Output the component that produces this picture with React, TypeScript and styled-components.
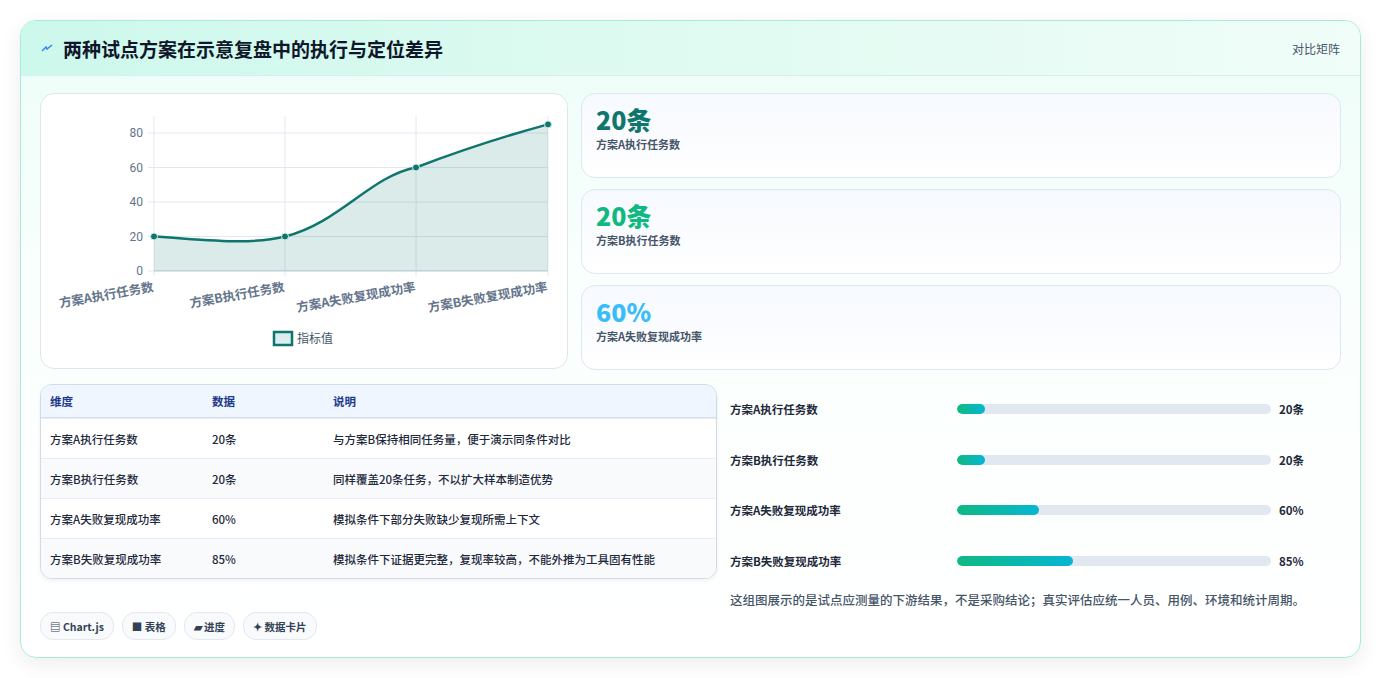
import styled, { createGlobalStyle } from 'styled-components';

const Global = createGlobalStyle`
    html, body { margin: 0; background: #ffffff; }
    body { font-family: 'Noto Sans CJK SC', 'Noto Sans', sans-serif; color: #1e293b; }
`;

const Page = styled.div`
    padding: 20px;
`;

const Card = styled.div`
    border: 1px solid #a7ecd9;
    border-radius: 16px;
    background: linear-gradient(180deg, #ecfdf7 0%, #f9fffd 40%, #ffffff 100%);
    box-shadow: 0 6px 20px rgba(15, 23, 42, 0.08);
    overflow: hidden;
    height: 638px;
    box-sizing: border-box;
`;

const Header = styled.div`
    height: 54px;
    display: flex;
    align-items: center;
    justify-content: space-between;
    padding: 0 20px;
    background: linear-gradient(90deg, #cdf8ec 0%, #e3fbf2 60%, #f0fdf8 100%);
    border-bottom: 1px solid #d7eef0;
`;

const Title = styled.h1`
    margin: 0;
    font-size: 19px;
    font-weight: 700;
    color: #0f172a;
    display: flex;
    align-items: center;
    gap: 10px;
`;

const HeaderTag = styled.span`
    font-size: 12px;
    color: #475569;
`;

const Body = styled.div`
    padding: 17px 19px 0 19px;
`;

const Row = styled.div<{ $cols: string; $mt?: number }>`
    display: grid;
    grid-template-columns: ${p => p.$cols};
    gap: 13px;
    margin-top: ${p => p.$mt ?? 0}px;
`;

const Panel = styled.div`
    background: #ffffff;
    border: 1px solid #dde7f0;
    border-radius: 14px;
    height: 276px;
    box-sizing: border-box;
`;

const Stats = styled.div`
    display: flex;
    flex-direction: column;
    gap: 11px;
`;

const Stat = styled.div`
    height: 85px;
    box-sizing: border-box;
    border: 1px solid #dce8f2;
    border-radius: 14px;
    background: linear-gradient(180deg, #f6f9fe 0%, #ffffff 100%);
    padding: 9px 14px;
`;

const StatValue = styled.div<{ $color: string }>`
    font-size: 25px;
    font-weight: 800;
    color: ${p => p.$color};
    line-height: 32px;
`;

const StatLabel = styled.div`
    font-size: 11px;
    color: #475569;
    font-weight: 600;
    margin-top: 1px;
`;

const Table = styled.table`
    width: 100%;
    border-collapse: separate;
    border-spacing: 0;
    border: 1px solid #cfdbe8;
    border-radius: 12px;
    overflow: hidden;
    font-size: 11.5px;
    background: #fff;
    box-shadow: 0 2px 4px rgba(15, 23, 42, 0.06);
`;

const Th = styled.th<{ $w?: number }>`
    text-align: left;
    font-weight: 600;
    color: #1e3a8a;
    background: #eff6ff;
    height: 32px;
    padding: 0 9px;
    width: ${p => (p.$w ? `${p.$w}px` : 'auto')};
    border-bottom: 1px solid #d5e0ec;
`;

const Td = styled.td<{ $alt?: boolean }>`
    height: 39px;
    padding: 0 9px;
    color: #1e293b;
    font-weight: 500;
    background: ${p => (p.$alt ? '#f8fafc' : '#ffffff')};
    border-top: 1px solid #e6edf4;
`;

const Bars = styled.div`
    display: flex;
    flex-direction: column;
    padding: 0;
`;

const BarRow = styled.div`
    display: grid;
    grid-template-columns: 227px 314px 60px;
    align-items: center;
    height: 50.5px;
    font-size: 11.5px;
    font-weight: 600;
    color: #1e293b;
`;

const Track = styled.div`
    height: 10px;
    border-radius: 5px;
    background: #e2e8f0;
    overflow: hidden;
`;

const Fill = styled.div`
    height: 100%;
    border-radius: 5px;
    background: linear-gradient(90deg, #10b981, #06b6d4);
`;

const BarValue = styled.span`
    padding-left: 8px;
`;

const Note = styled.p`
    margin: 4px 0 0 0;
    font-size: 12.5px;
    color: #475569;
    font-weight: 500;
`;

const Chips = styled.div`
    display: flex;
    gap: 8px;
    margin-top: 33px;
`;

const Chip = styled.span`
    height: 26px;
    padding: 0 9px;
    display: inline-flex;
    align-items: center;
    gap: 4px;
    border: 1px solid #e2e8f0;
    border-radius: 13px;
    background: #f8fafc;
    font-size: 10.5px;
    font-weight: 600;
    color: #334155;
`;

const px = (v: number) => 271 - v * 1.725;
const labels = ['方案A执行任务数', '方案B执行任务数', '方案A失败复现成功率', '方案B失败复现成功率'];
const xs = [154, 285, 416, 548];

function Chart() {
    const line = `M154 ${px(20)} C210 ${px(18)} 250 ${px(15)} 285 ${px(20)} C340 ${px(28)} 370 ${px(55)} 416 ${px(60)} C470 ${px(72)} 510 ${px(79)} 548 ${px(85)}`;
    return (
        <svg width="526" height="274" viewBox="41 94 526 274" style={{ display: 'block' }}>
            {[0, 20, 40, 60, 80].map(v => (
                <g key={v}>
                    <line x1="148" x2="548" y1={px(v)} y2={px(v)} stroke="#e2e8f0" />
                    <text x="143" y={px(v) + 4} fontSize="12" fill="#64748b" textAnchor="end" fontFamily="Roboto, sans-serif">{v}</text>
                </g>
            ))}
            {xs.map(x => (
                <line key={x} x1={x} x2={x} y1="116" y2="276" stroke="#e2e8f0" />
            ))}
            <line x1="154" x2="548" y1="271" y2="271" stroke="#cbd5e1" />
            <path d={`${line} L548 271 L154 271 Z`} fill="rgba(15,118,110,0.15)" />
            <path d={line} fill="none" stroke="#0f766e" strokeWidth="2.5" />
            {xs.map((x, i) => (
                <circle key={x} cx={x} cy={px([20, 20, 60, 85][i])} r="3.5" fill="#0f766e" stroke="#dbeeee" strokeWidth="1" />
            ))}
            {labels.map((l, i) => (
                <text key={l} x={xs[i]} y="291" fontSize="12.5" fontWeight="600" fill="#64748b" textAnchor="end" transform={`rotate(-10 ${xs[i]} 291)`}>{l}</text>
            ))}
            <rect x="274" y="332" width="18" height="13" fill="#dbeeee" stroke="#0f766e" strokeWidth="2.5" />
            <text x="297" y="343" fontSize="12" fill="#475569">指标值</text>
        </svg>
    );
}

const rows = [
    ['方案A执行任务数', '20条', '与方案B保持相同任务量，便于演示同条件对比'],
    ['方案B执行任务数', '20条', '同样覆盖20条任务，不以扩大样本制造优势'],
    ['方案A失败复现成功率', '60%', '模拟条件下部分失败缺少复现所需上下文'],
    ['方案B失败复现成功率', '85%', '模拟条件下证据更完整，复现率较高，不能外推为工具固有性能'],
];

const bars: [string, string, number][] = [
    ['方案A执行任务数', '20条', 9],
    ['方案B执行任务数', '20条', 9],
    ['方案A失败复现成功率', '60%', 26],
    ['方案B失败复现成功率', '85%', 37],
];

export default function App() {
    return (
        <Page>
            <Global />
            <Card>
                <Header>
                    <Title>
                        <svg width="12" height="12" viewBox="0 0 12 12">
                            <path d="M1 9 L5 5 L6 7 L11 3" stroke="#3b82f6" strokeWidth="1.5" fill="none" />
                        </svg>
                        两种试点方案在示意复盘中的执行与定位差异
                    </Title>
                    <HeaderTag>对比矩阵</HeaderTag>
                </Header>
                <Body>
                    <Row $cols="528px 1fr">
                        <Panel>
                            <Chart />
                        </Panel>
                        <Stats>
                            <Stat>
                                <StatValue $color="#0f766e">20条</StatValue>
                                <StatLabel>方案A执行任务数</StatLabel>
                            </Stat>
                            <Stat>
                                <StatValue $color="#10b981">20条</StatValue>
                                <StatLabel>方案B执行任务数</StatLabel>
                            </Stat>
                            <Stat>
                                <StatValue $color="#38bdf8">60%</StatValue>
                                <StatLabel>方案A失败复现成功率</StatLabel>
                            </Stat>
                        </Stats>
                    </Row>
                    <Row $cols="677px 1fr" $mt={14}>
                        <div>
                            <Table>
                                <thead>
                                    <tr>
                                        <Th $w={144}>维度</Th>
                                        <Th $w={103}>数据</Th>
                                        <Th>说明</Th>
                                    </tr>
                                </thead>
                                <tbody>
                                    {rows.map((r, i) => (
                                        <tr key={r[0]}>
                                            {r.map(c => (
                                                <Td key={c} $alt={i % 2 === 1}>{c}</Td>
                                            ))}
                                        </tr>
                                    ))}
                                </tbody>
                            </Table>
                            <Chips>
                                <Chip>▤ Chart.js</Chip>
                                <Chip>■ 表格</Chip>
                                <Chip>▰ 进度</Chip>
                                <Chip>✦ 数据卡片</Chip>
                            </Chips>
                        </div>
                        <Bars>
                            {bars.map(([l, v, w]) => (
                                <BarRow key={l}>
                                    <span>{l}</span>
                                    <Track>
                                        <Fill style={{ width: `${w}%` }} />
                                    </Track>
                                    <BarValue>{v}</BarValue>
                                </BarRow>
                            ))}
                            <Note>这组图展示的是试点应测量的下游结果，不是采购结论；真实评估应统一人员、用例、环境和统计周期。</Note>
                        </Bars>
                    </Row>
                </Body>
            </Card>
        </Page>
    );
}
